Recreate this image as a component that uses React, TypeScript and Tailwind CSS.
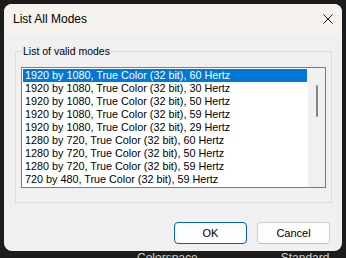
import React from 'react';

const modes = [
  '1920 by 1080, True Color (32 bit), 60 Hertz',
  '1920 by 1080, True Color (32 bit), 30 Hertz',
  '1920 by 1080, True Color (32 bit), 50 Hertz',
  '1920 by 1080, True Color (32 bit), 59 Hertz',
  '1920 by 1080, True Color (32 bit), 29 Hertz',
  '1280 by 720, True Color (32 bit), 60 Hertz',
  '1280 by 720, True Color (32 bit), 50 Hertz',
  '1280 by 720, True Color (32 bit), 59 Hertz',
  '720 by 480, True Color (32 bit), 59 Hertz',
];

const CloseIcon = () => (
  <svg width="10" height="10" viewBox="0 0 10 10" fill="none">
    <path d="M0.5 0.5 L9.5 9.5 M9.5 0.5 L0.5 9.5" stroke="#1a1a1a" strokeWidth="1" />
  </svg>
);

export default function App() {
  return (
    <div
      className="w-[346px] h-[258px] bg-[#1c1c1c] overflow-hidden pl-[4px] pt-[4px] text-black"
      style={{ fontFamily: '"Liberation Sans", Arial, sans-serif' }}
    >
      <div className="w-[338px] h-[247px] rounded-[8px] bg-[#f0f0f0] overflow-hidden flex flex-col">
        {/* title bar */}
        <div className="h-[30px] shrink-0 bg-[#f6f2ed] flex items-center justify-between pl-[9px] pr-[9px]">
          <span className="text-[12px] leading-[14px]">List All Modes</span>
          <CloseIcon />
        </div>

        <div className="flex flex-col pl-[11px] pr-[10px] pt-[10px]">
          <fieldset className="border border-[#dcdcdc] px-[5px] pb-[14px]">
            <legend className="ml-[1px] px-[1px] text-[10.5px] leading-[14px]">List of valid modes</legend>
            <div className="mt-[9px] h-[121px] border border-[#7a7a7a] bg-white flex">
              <div className="w-[286px] p-[1px] flex flex-col">
                {modes.map((m, i) => (
                  <div
                    key={m}
                    className={`h-[13px] pl-[2px] text-[10.8px] leading-[13px] whitespace-nowrap ${
                      i === 0 ? 'bg-[#0078d7] text-white' : ''
                    }`}
                  >
                    {m}
                  </div>
                ))}
              </div>
              <div className="flex-1 bg-[#f0f0f0] flex justify-center">
                <div className="w-[2px] h-[32px] mt-[17px] rounded-full bg-[#858585]" />
              </div>
            </div>
          </fieldset>

          <div className="mt-[19px] flex justify-end gap-[10px] pr-[2px]">
            <button className="w-[73px] h-[22px] rounded-[4px] border border-[#005fb8] bg-[#fdfdfd] text-[11px]">
              OK
            </button>
            <button className="w-[73px] h-[22px] rounded-[4px] border border-[#d0d0d0] border-b-[#bdbdbd] bg-[#fdfdfd] text-[11px]">
              Cancel
            </button>
          </div>
        </div>
      </div>

      <div className="flex text-[12px] leading-[12px] text-[#cfcfcf] pt-[1px]">
        <span className="ml-[133px]">Colorspace</span>
        <span className="ml-[83px]">Standard</span>
      </div>
    </div>
  );
}
